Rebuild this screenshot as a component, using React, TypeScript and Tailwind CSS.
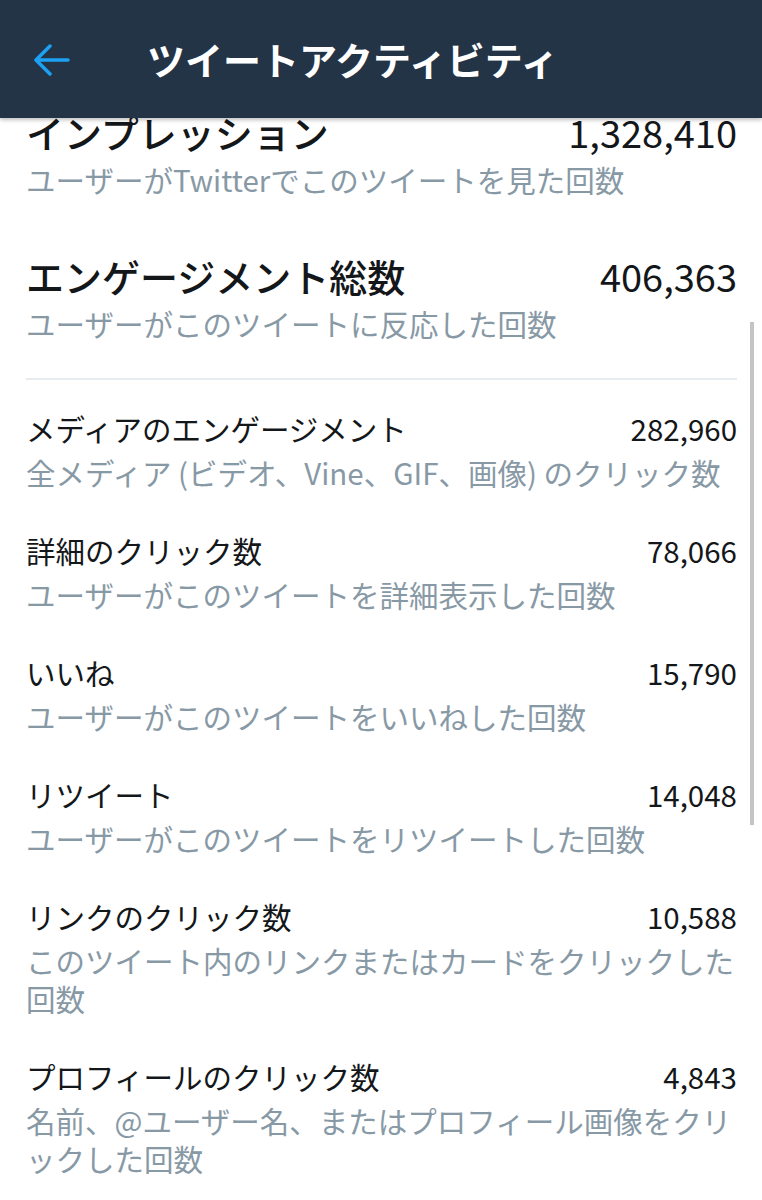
import React from 'react'

type Stat = {
  label: string
  value: string
  desc: string
}

const topStats: Stat[] = [
  {
    label: 'インプレッション',
    value: '1,328,410',
    desc: 'ユーザーがTwitterでこのツイートを見た回数',
  },
  {
    label: 'エンゲージメント総数',
    value: '406,363',
    desc: 'ユーザーがこのツイートに反応した回数',
  },
]

const stats: Stat[] = [
  {
    label: 'メディアのエンゲージメント',
    value: '282,960',
    desc: '全メディア (ビデオ、Vine、GIF、画像) のクリック数',
  },
  {
    label: '詳細のクリック数',
    value: '78,066',
    desc: 'ユーザーがこのツイートを詳細表示した回数',
  },
  {
    label: 'いいね',
    value: '15,790',
    desc: 'ユーザーがこのツイートをいいねした回数',
  },
  {
    label: 'リツイート',
    value: '14,048',
    desc: 'ユーザーがこのツイートをリツイートした回数',
  },
  {
    label: 'リンクのクリック数',
    value: '10,588',
    desc: 'このツイート内のリンクまたはカードをクリックした回数',
  },
  {
    label: 'プロフィールのクリック数',
    value: '4,843',
    desc: '名前、@ユーザー名、またはプロフィール画像をクリックした回数',
  },
]

function BackArrow() {
  return (
    <svg width="38" height="32" viewBox="0 0 38 32" fill="none" aria-hidden="true">
      <path
        d="M35 16H3M17 2L3 16l14 14"
        stroke="#1da1f2"
        strokeWidth="3.5"
        strokeLinecap="round"
        strokeLinejoin="round"
      />
    </svg>
  )
}

function TopRow({ stat, first }: { stat: Stat; first?: boolean }) {
  return (
    <div className={first ? '' : 'mt-[54px]'}>
      <div className="flex items-center justify-between text-[38px] leading-[46px] text-[#14171a]">
        <span className="font-medium">{stat.label}</span>
        <span className="font-normal">{stat.value}</span>
      </div>
      <p className="mt-[4px] text-[29.5px] leading-[40px] text-[#8899a6]">{stat.desc}</p>
    </div>
  )
}

function Row({ stat }: { stat: Stat }) {
  return (
    <div className="mb-[39px]">
      <div className="flex items-center justify-between text-[29.5px] leading-[40px] text-[#14171a]">
        <span>{stat.label}</span>
        <span>{stat.value}</span>
      </div>
      <p className="mt-[5px] text-[29.5px] leading-[38px] text-[#8899a6]">{stat.desc}</p>
    </div>
  )
}

export default function App() {
  return (
    <div
      className="relative h-[1200px] w-[762px] overflow-hidden bg-white"
      style={{ fontFamily: '"Noto Sans CJK JP", "Noto Sans", sans-serif' }}
    >
      <header className="relative z-10 flex h-[118px] items-center bg-[#243447] shadow-[0_2px_4px_rgba(0,0,0,0.25)]">
        <div className="ml-[33px] mt-[2px] flex">
          <BackArrow />
        </div>
        <h1 className="ml-[76px] text-[38px] font-bold leading-none text-white">
          ツイートアクティビティ
        </h1>
      </header>

      <main className="-mt-[9px] pl-[26px] pr-[25px]">
        {topStats.map((s, i) => (
          <TopRow key={s.label} stat={s} first={i === 0} />
        ))}
        <div className="mt-[35px] h-[2px] bg-[#e6ecf0]" />
        <div className="pt-[28px]">
          {stats.map((s) => (
            <Row key={s.label} stat={s} />
          ))}
        </div>
      </main>

      <div className="absolute left-[750px] top-[322px] h-[503px] w-[4px] bg-[#c4c4c4]" />
    </div>
  )
}
